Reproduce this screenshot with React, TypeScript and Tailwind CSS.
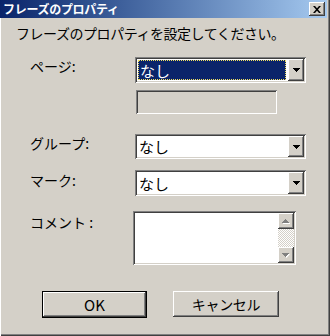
import React from "react";

const sunken =
  "shadow-[inset_1px_1px_#808080,inset_-1px_-1px_#ffffff,inset_2px_2px_#404040,inset_-2px_-2px_#d4d0c8]";
const raised =
  "shadow-[inset_-1px_-1px_#404040,inset_1px_1px_#ffffff,inset_-2px_-2px_#808080,inset_2px_2px_#d4d0c8]";

function DownArrow() {
  return (
    <svg width="7" height="4" viewBox="0 0 7 4">
      <path d="M0 0h7v1h-1v1h-1v1h-1v1h-1v-1h-1v-1h-1v-1h-1z" fill="#000" />
    </svg>
  );
}

function Combo({ selected, h }: { selected?: boolean; h: string }) {
  return (
    <div className={`w-[171px] ${h} bg-white ${sunken} flex p-[2px]`}>
      <div className="flex-1 p-[1px] flex">
        {selected ? (
          <div className="flex-1 bg-[#0a246a] border border-dotted border-[#f0e060] flex items-center pl-[1px] text-white text-[15px] leading-none">
            なし
          </div>
        ) : (
          <div className="flex-1 flex items-center pl-[1px] text-black text-[15px] leading-none">なし</div>
        )}
      </div>
      <div className={`w-[16px] ml-[1px] bg-[#d4d0c8] ${raised} flex items-center justify-center`}>
        <DownArrow />
      </div>
    </div>
  );
}

function ScrollArrow({ up }: { up?: boolean }) {
  return (
    <div className={`w-[16px] h-[16px] bg-[#d4d0c8] ${raised} flex items-center justify-center`}>
      <svg width="8" height="5" viewBox="0 0 8 5">
        {up ? (
          <>
            <path d="M1 4h7v1h-7z" fill="#fff" />
            <path d="M3 0h1v1h1v1h1v1h1v1h-7v-1h1v-1h1v-1h1z" fill="#808080" />
          </>
        ) : (
          <>
            <path d="M1 1h7l-3.5 4z" fill="#fff" />
            <path d="M0 0h7v1h-1v1h-1v1h-1v1h-1v-1h-1v-1h-1v-1h-1z" fill="#808080" />
          </>
        )}
      </svg>
    </div>
  );
}

export default function App() {
  return (
    <div className="w-[330px] h-[336px] bg-[#d4d0c8] flex flex-col overflow-hidden font-['Noto_Sans_CJK_JP','Noto_Sans',sans-serif] shadow-[inset_1px_0_#ffffff,inset_-1px_-1px_#404040,inset_-2px_-2px_#808080] text-black">
      <div className="w-[327px] h-[18px] shrink-0 bg-gradient-to-r from-[#0a246a] to-[#a6caf0] flex items-center justify-between pl-[3px] pr-[2px]">
        <span className="text-white font-bold text-[12px] leading-none tracking-[-0.3px]">フレーズのプロパティ</span>
        <div className={`w-[16px] h-[14px] bg-[#d4d0c8] ${raised} flex items-center justify-center`}>
          <svg width="8" height="7" viewBox="0 0 8 7">
            <path d="M0 0h2l2 2.2L6 0h2L5 3.5 8 7H6L4 4.8 2 7H0l3-3.5z" fill="#000" />
          </svg>
        </div>
      </div>

      <div className="mt-[5px] ml-[16px] h-[20px] leading-[20px] text-[14px] tracking-[-0.45px]">
        フレーズのプロパティを設定してください。
      </div>

      <div className="mt-[14px] flex">
        <div className="w-[135px] pl-[30px] text-[14px] leading-[18px]">ページ:</div>
        <Combo selected h="h-[26px]" />
      </div>

      <div className="mt-[7px] pl-[136px]">
        <div className={`w-[141px] h-[24px] bg-[#d4d0c8] ${sunken}`} />
      </div>

      <div className="mt-[20px] flex">
        <div className="w-[135px] pl-[30px] text-[14px] leading-[18px]">グループ:</div>
        <Combo h="h-[25px]" />
      </div>

      <div className="mt-[11px] flex">
        <div className="w-[135px] pl-[30px] text-[14px] leading-[18px] pt-[1px]">マーク:</div>
        <Combo h="h-[26px]" />
      </div>

      <div className="mt-[15px] flex">
        <div className="w-[133px] pl-[30px] text-[14px] leading-[18px] pt-[2px]">コメント :</div>
        <div className={`w-[163px] h-[54px] bg-white ${sunken} p-[2px] flex justify-end`}>
          <div className="w-[16px] flex flex-col">
            <ScrollArrow up />
            <div className="flex-1 bg-[image:repeating-conic-gradient(#d4d0c8_0%_25%,#ffffff_0%_50%)] bg-[length:2px_2px]" />
            <ScrollArrow />
          </div>
        </div>
      </div>

      <div className="mt-[26px] flex pl-[42px] gap-[26px] items-start">
        <div className="w-[105px] h-[27px] border border-black">
          <div className={`w-full h-full ${raised} flex items-center justify-center text-[15px] leading-none`}>OK</div>
        </div>
        <div className={`w-[106px] h-[26px] ${raised} flex items-center justify-center text-[14px] leading-none tracking-[-0.3px]`}>
          キャンセル
        </div>
      </div>
    </div>
  );
}
